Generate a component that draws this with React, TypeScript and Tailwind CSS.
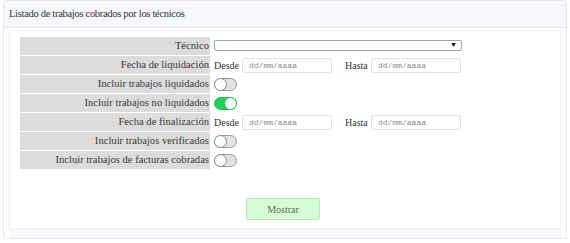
import React, { useState } from 'react';

const serif = "font-['Liberation_Serif','Times_New_Roman',serif]";

const Toggle: React.FC<{ on?: boolean }> = ({ on = false }) => {
  const [value, setValue] = useState(on);
  return (
    <button
      type="button"
      onClick={() => setValue(!value)}
      className={`relative h-[13px] w-[23px] rounded-full border ${
        value ? 'bg-[#1fd15a] border-[#1fc050]' : 'bg-[#e2e2e2] border-[#9a9a9a]'
      }`}
    >
      <span
        className={`absolute top-[-1px] h-[13px] w-[13px] rounded-full bg-white border ${
          value ? 'right-[-1px] border-[#1fc050]' : 'left-[-1px] border-[#8a8a8a]'
        }`}
      />
    </button>
  );
};

const DateInput: React.FC = () => (
  <input
    type="text"
    placeholder="dd/mm/aaaa"
    className="h-[15px] w-[90px] border border-[#e2e2e2] rounded-[2px] px-[6px] text-[8px] text-[#666] placeholder:text-[#8a8a8a] font-['Liberation_Mono','Courier_New',monospace] outline-none"
  />
);

const DateRange: React.FC = () => (
  <div className={`flex items-center text-[10px] text-[#333] ${serif}`}>
    <span className="w-[28px]">Desde</span>
    <DateInput />
    <span className="ml-[13px] w-[26px]">Hasta</span>
    <DateInput />
  </div>
);

const Row: React.FC<{ label: string; children?: React.ReactNode }> = ({ label, children }) => (
  <div className="flex h-[19px]">
    <div
      className={`w-[190px] shrink-0 bg-[#dcdcdc] border-b border-white flex items-center justify-end pr-[1px] text-[10.6px] text-[#3a3a3a] ${serif}`}
    >
      {label}
    </div>
    <div className="flex items-center pl-[4px]">{children}</div>
  </div>
);

export default function App() {
  return (
    <div className="w-[570px] h-[243px] bg-white px-[3px] pt-0 pb-[4px]">
      <div className="h-full border border-[#e3e7ef] rounded-[3px] flex flex-col">
        <div
          className={`h-[27px] shrink-0 bg-[#f6f7fb] border-b border-[#e3e7ef] flex items-center pl-[5px] text-[10.5px] tracking-[-0.3px] text-[#333] ${serif}`}
        >
          Listado de trabajos cobrados por los técnicos
        </div>
        <div className="flex-1 flex flex-col px-[5px] pt-[2px]">
          <div className="flex-1 border border-[#eef0f4] shadow-[0_1px_3px_rgba(0,0,0,0.06)] pl-[10px] pt-[6px]">
            <Row label="Técnico">
              <div className="relative h-[11px] w-[248px] border border-[#a5a5a5] rounded-[2px] bg-white -mt-[2px]">
                <span className="absolute right-[4px] top-[-1px] text-[7px] text-black">▼</span>
              </div>
            </Row>
            <Row label="Fecha de liquidación">
              <DateRange />
            </Row>
            <Row label="Incluir trabajos liquidados">
              <Toggle />
            </Row>
            <Row label="Incluir trabajos no liquidados">
              <Toggle on />
            </Row>
            <Row label="Fecha de finalización">
              <DateRange />
            </Row>
            <Row label="Incluir trabajos verificados">
              <Toggle />
            </Row>
            <Row label="Incluir trabajos de facturas cobradas">
              <Toggle />
            </Row>
            <div className="flex justify-center pt-[28px] pr-[14px]">
              <button
                type="button"
                className={`h-[22px] w-[74px] bg-[#d4fdd4] border border-[#b8e6b8] rounded-[2px] text-[10px] text-[#666] ${serif}`}
              >
                Mostrar
              </button>
            </div>
          </div>
          <div className="h-[9px] shrink-0 bg-[#f6f7fb]" />
        </div>
      </div>
    </div>
  );
}
